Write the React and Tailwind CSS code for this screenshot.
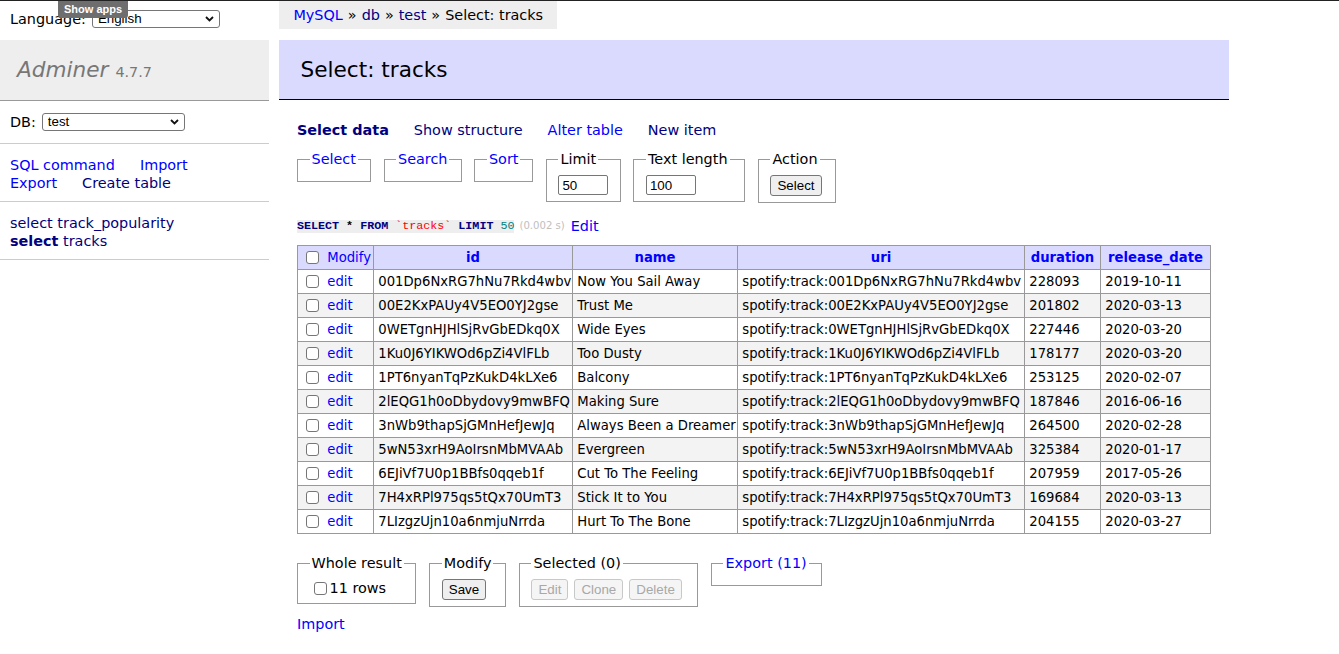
import { useState } from 'react'

const tracks = [
  ['001Dp6NxRG7hNu7Rkd4wbv', 'Now You Sail Away', '228093', '2019-10-11'],
  ['00E2KxPAUy4V5EO0YJ2gse', 'Trust Me', '201802', '2020-03-13'],
  ['0WETgnHJHlSjRvGbEDkq0X', 'Wide Eyes', '227446', '2020-03-20'],
  ['1Ku0J6YIKWOd6pZi4VlFLb', 'Too Dusty', '178177', '2020-03-20'],
  ['1PT6nyanTqPzKukD4kLXe6', 'Balcony', '253125', '2020-02-07'],
  ['2lEQG1h0oDbydovy9mwBFQ', 'Making Sure', '187846', '2016-06-16'],
  ['3nWb9thapSjGMnHefJewJq', 'Always Been a Dreamer', '264500', '2020-02-28'],
  ['5wN53xrH9AoIrsnMbMVAAb', 'Evergreen', '325384', '2020-01-17'],
  ['6EJiVf7U0p1BBfs0qqeb1f', 'Cut To The Feeling', '207959', '2017-05-26'],
  ['7H4xRPl975qs5tQx70UmT3', 'Stick It to You', '169684', '2020-03-13'],
  ['7LIzgzUjn10a6nmjuNrrda', 'Hurt To The Bone', '204155', '2020-03-27'],
]

function Check() {
  return (
    <input
      type="checkbox"
      className="appearance-none w-[13px] h-[13px] m-0 border border-[#767676] rounded-[3px] bg-white shrink-0"
    />
  )
}

function Select({ value, className }) {
  return (
    <div className={`relative inline-flex h-[18px] border border-[#767676] rounded-[3px] bg-white ${className}`}>
      <select className="appearance-none w-full h-full bg-transparent pl-[5px] pr-5 text-[13.33px] leading-[16px] text-black outline-none font-['Liberation_Sans',Arial,sans-serif]">
        <option>{value}</option>
      </select>
      <svg className="pointer-events-none absolute right-[5px] top-[5px]" width="9" height="6" viewBox="0 0 9 6">
        <path d="M1 1 L4.5 4.5 L8 1" fill="none" stroke="#111" strokeWidth="1.8" />
      </svg>
    </div>
  )
}

function Button({ children, disabled }) {
  return (
    <button
      disabled={disabled}
      className={`h-[21px] px-[6px] border rounded-[3px] text-[13.33px] leading-[17px] font-['Liberation_Sans',Arial,sans-serif] ${
        disabled ? 'bg-[#f5f5f5] border-[#c8c8c8] text-[#a8a8a8]' : 'bg-[#efefef] border-[#767676] text-black'
      }`}
    >
      {children}
    </button>
  )
}

function Fieldset({ legend, link, width, children }) {
  return (
    <fieldset className={`border border-[#999] px-[11.5px] pt-[7px] pb-[6px] ${width}`}>
      <legend className={`px-[2px] whitespace-nowrap ${link ? 'text-[#00f]' : ''}`}>{legend}</legend>
      {children}
    </fieldset>
  )
}

const cell = 'border border-[#999] px-[4.3px] py-[2px] leading-[19px] whitespace-nowrap'

export default function App() {
  const [lang] = useState('English')

  return (
    <div className="relative min-h-screen bg-white border-t border-[#222] text-black text-[14.4px] leading-[18px] font-['DejaVu_Sans',Verdana,sans-serif]">
      {/* Show apps tooltip */}
      <div className="absolute top-0 left-[58px] z-10 h-[17px] px-[6px] bg-[#6e6e6e] rounded-b-[3px] text-white text-[11px] font-bold leading-[16px] font-['Liberation_Sans',Arial,sans-serif]">
        Show apps
      </div>

      <div className="flex">
        {/* Sidebar */}
        <aside className="w-[269px] shrink-0">
          <div className="h-[39px] pb-[4px] flex items-center px-[10px] gap-[6px]">
            <span>Language:</span>
            <Select value={lang} className="w-[128px]" />
          </div>
          <h1 className="h-[61px] flex items-baseline pt-[16px] pl-[17px] bg-[#eee] border-b border-[#999] text-[#777] text-[21.6px] leading-[27px]">
            <span className="italic">Adminer</span>
            <span className="ml-[7px] text-[14.4px]">4.7.7</span>
          </h1>
          <div className="h-[43px] flex items-center px-[10px] gap-[6px] border-b border-[#ccc]">
            <span>DB:</span>
            <Select value="test" className="w-[143px]" />
          </div>
          <div className="px-[10px] pt-[12px] pb-[9px] border-b border-[#ccc]">
            <div className="flex gap-x-[25px]">
              <a className="text-[#00f]">SQL command</a>
              <a className="text-[#00f]">Import</a>
            </div>
            <div className="flex gap-x-[25px]">
              <a className="text-[#00f]">Export</a>
              <a className="text-[#000080]">Create table</a>
            </div>
          </div>
          <div className="px-[10px] pt-[12px] pb-[9px] border-b border-[#ccc] text-[#000080]">
            <div>select track_popularity</div>
            <div>
              <span className="font-bold">select</span> tracks
            </div>
          </div>
        </aside>

        {/* Main */}
        <main className="flex-1 pl-[10px]">
          <div className="inline-flex items-center h-[28px] pb-[1px] pl-[14.4px] pr-[14px] bg-[#eee] text-[#000]">
            <a className="text-[#00f]">MySQL</a>
            <span className="mx-[5px]">»</span>
            <a className="text-[#000080]">db</a>
            <span className="mx-[5px]">»</span>
            <a className="text-[#000080]">test</a>
            <span className="mx-[5px]">»</span>
            <span>Select: tracks</span>
          </div>

          <h2 className="mt-[11px] w-[950px] h-[60px] flex items-center pl-[21.6px] bg-[#dadaff] border-b border-black text-[21.6px] leading-[27px]">
            Select: tracks
          </h2>

          <div className="pl-[18px]">
            <div className="mt-[21px] flex gap-x-[25px]">
              <a className="font-bold text-[#000080]">Select data</a>
              <a className="text-[#000080]">Show structure</a>
              <a className="text-[#00f]">Alter table</a>
              <a className="text-[#000080]">New item</a>
            </div>

            <div className="mt-[11px] flex items-start gap-[12.5px]">
              <Fieldset legend="Select" link width="min-w-[74px]" />
              <Fieldset legend="Search" link width="min-w-[78px]" />
              <Fieldset legend="Sort" link width="min-w-[59px]" />
              <Fieldset legend="Limit" width="min-w-[74px]">
                <input
                  defaultValue="50"
                  className="block w-[50px] h-[20px] px-[3px] border border-[#767676] rounded-[2px] text-[13.33px] font-['Liberation_Sans',Arial,sans-serif]"
                />
              </Fieldset>
              <Fieldset legend="Text length" width="min-w-[112px]">
                <input
                  defaultValue="100"
                  className="block w-[50px] h-[20px] px-[3px] border border-[#767676] rounded-[2px] text-[13.33px] font-['Liberation_Sans',Arial,sans-serif]"
                />
              </Fieldset>
              <Fieldset legend="Action" width="min-w-[78px]">
                <div className="flex">
                  <Button>Select</Button>
                </div>
              </Fieldset>
            </div>

            <p className="mt-[14px] flex items-center">
              <code className="bg-[#eee] text-[11.7px] leading-[13px] font-['Liberation_Mono','Courier_New',monospace]">
                <b className="text-[#000080]">SELECT</b> <b>*</b> <b className="text-[#000080]">FROM</b>{' '}
                <span className="text-[#f00]">`tracks`</span> <b className="text-[#000080]">LIMIT</b>{' '}
                <span className="text-[#008080]">50</span>
              </code>
              <span className="ml-[5px] text-[10.1px] text-[#c0c0c0]">(0.002 s)</span>
              <a className="ml-[6px] text-[#00f]">Edit</a>
            </p>

            <table className="mt-[10px] w-[913px] table-fixed border-collapse border border-[#999] text-[13.2px]">
              <colgroup>
                <col className="w-[76px]" />
                <col className="w-[199px]" />
                <col className="w-[165px]" />
                <col className="w-[287px]" />
                <col className="w-[76px]" />
                <col className="w-[110px]" />
              </colgroup>
              <thead>
                <tr className="bg-[#dadaff]">
                  <td className={cell}>
                    <span className="flex items-center">
                      <span className="ml-[4px] flex"><Check /></span>
                      <a className="ml-[8px] text-[#00f]">Modify</a>
                    </span>
                  </td>
                  {['id', 'name', 'uri', 'duration', 'release_date'].map(h => (
                    <th key={h} className={`${cell} text-center font-bold text-[#00f]`}>
                      {h}
                    </th>
                  ))}
                </tr>
              </thead>
              <tbody>
                {tracks.map(([id, name, dur, date], i) => (
                  <tr key={id} className={i % 2 === 1 ? 'bg-[#f3f3f3]' : 'bg-white'}>
                    <td className={cell}>
                      <span className="flex items-center">
                        <span className="ml-[4px] flex"><Check /></span>
                        <a className="ml-[8px] text-[#00f]">edit</a>
                      </span>
                    </td>
                    <td className={cell}>{id}</td>
                    <td className={cell}>{name}</td>
                    <td className={cell}>spotify:track:{id}</td>
                    <td className={cell}>{dur}</td>
                    <td className={cell}>{date}</td>
                  </tr>
                ))}
              </tbody>
            </table>

            <div className="mt-[20px] flex items-start gap-[13px]">
              <Fieldset legend="Whole result" width="min-w-[119px]">
                <label className="flex items-center">
                  <span className="ml-[4px] mr-[3px] flex"><Check /></span>
                  11 rows
                </label>
              </Fieldset>
              <Fieldset legend="Modify" width="min-w-[76px]">
                <div className="flex">
                  <Button>Save</Button>
                </div>
              </Fieldset>
              <Fieldset legend="Selected (0)" width="min-w-[179px]">
                <div className="flex gap-[6px]">
                  <Button disabled>Edit</Button>
                  <Button disabled>Clone</Button>
                  <Button disabled>Delete</Button>
                </div>
              </Fieldset>
              <Fieldset legend="Export (11)" link width="min-w-[111px]" />
            </div>

            <p className="mt-[8px]">
              <a className="text-[#00f]">Import</a>
            </p>
          </div>
        </main>
      </div>
    </div>
  )
}
